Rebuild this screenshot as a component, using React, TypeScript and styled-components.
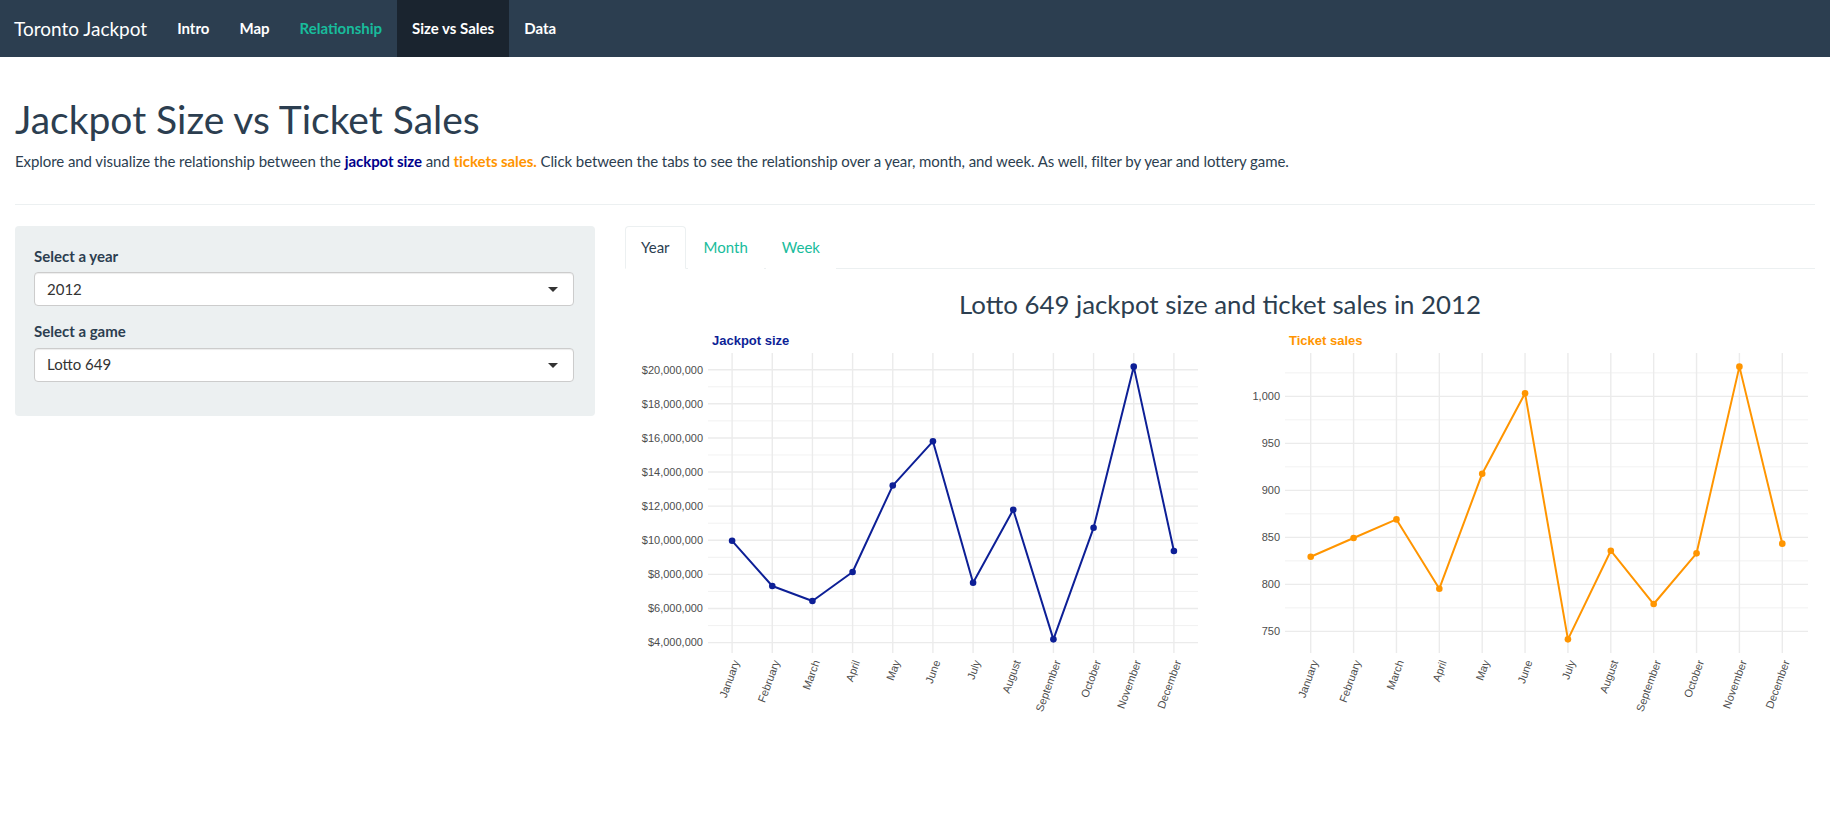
import * as React from 'react'
import styled, { createGlobalStyle } from 'styled-components'

const colors = {
  navy: '#2c3e50',
  navyDark: '#1a242f',
  green: '#18bc9c',
  light: '#ecf0f1',
  blue: '#0d1f96',
  darkBlue: '#00008b',
  orange: '#ff9500',
  axis: '#4d4d4d',
  grid: '#ebebeb'
}

const months = [
  'January',
  'February',
  'March',
  'April',
  'May',
  'June',
  'July',
  'August',
  'September',
  'October',
  'November',
  'December'
]

const jackpot = [
  9968000, 7321000, 6438000, 8142000, 13208000, 15802000, 7507000, 11790000, 4190000, 10731000,
  20180000, 9372000
]

const tickets = [829.4, 849.3, 869.1, 795.4, 917.7, 1003.2, 741.5, 835.8, 779.1, 833.0, 1031.6, 843.3]

const GlobalStyle = createGlobalStyle`
  body {
    margin: 0;
    background: #fff;
    font-family: Lato, "Open Sans", "Liberation Sans", sans-serif;
    font-size: 15px;
    line-height: 1.42857;
    color: ${colors.navy};
  }
  * {
    box-sizing: border-box;
  }
`

const Navbar = styled.nav`
  display: flex;
  height: 57px;
  background: ${colors.navy};
  margin-bottom: 21px;
`

const Brand = styled.div`
  padding: 18px 15px 18px 14px;
  font-size: 19px;
  line-height: 21px;
  color: #fff;
`

const NavLink = styled.a<{ $active?: boolean; $hover?: boolean }>`
  display: block;
  padding: 18px 15px;
  line-height: 21px;
  font-weight: 700;
  text-decoration: none;
  color: ${(p) => (p.$hover ? colors.green : '#fff')};
  background: ${(p) => (p.$active ? colors.navyDark : 'transparent')};
`

const Page = styled.div`
  display: flow-root;
  padding: 0 15px;
`

const Title = styled.h1`
  margin: 20px 0 10px;
  font-size: 39px;
  font-weight: 400;
  line-height: 1.1;
`

const Lead = styled.p`
  margin: 0 0 10.5px;
  letter-spacing: -0.07px;
`

const Highlight = styled.b<{ $color: string }>`
  color: ${(p) => p.$color};
`

const Divider = styled.hr`
  margin: 31.5px 0 21px;
  border: 0;
  border-top: 1px solid ${colors.light};
`

const Layout = styled.div`
  display: grid;
  grid-template-columns: 580px 1fr;
  gap: 30px;
  align-items: start;
`

const Well = styled.div`
  background: ${colors.light};
  border-radius: 4px;
  padding: 20px 21px 19px 19px;
`

const FormGroup = styled.div`
  margin-bottom: 15px;
`

const Label = styled.label`
  display: block;
  margin-bottom: 5px;
  font-weight: 700;
`

const SelectBox = styled.div`
  display: flex;
  align-items: center;
  justify-content: space-between;
  height: 34px;
  padding: 0 15px 0 12px;
  background: #fff;
  border: 1px solid #cccccc;
  border-radius: 4px;
  box-shadow: inset 0 1px 1px rgba(0, 0, 0, 0.075);
  color: #333;
`

const Caret = styled.span`
  width: 0;
  height: 0;
  border-style: solid;
  border-width: 5px 5px 0;
  border-color: #333 transparent transparent;
  margin-top: 1px;
`

const TabBar = styled.ul`
  display: flex;
  margin: 0;
  padding: 0;
  list-style: none;
  border-bottom: 1px solid ${colors.light};
`

const Tab = styled.li<{ $active?: boolean }>`
  margin: 0 2px -1px 0;
  padding: 10px 15px;
  line-height: 21.4px;
  border: 1px solid ${(p) => (p.$active ? colors.light : 'transparent')};
  border-bottom-color: ${(p) => (p.$active ? '#fff' : 'transparent')};
  border-radius: 4px 4px 0 0;
  background: #fff;
  color: ${(p) => (p.$active ? colors.navy : colors.green)};
`

const ChartTitle = styled.h3`
  margin: 21px 0 2px;
  font-size: 25.8px;
  font-weight: 400;
  line-height: 1.1;
  text-align: center;
`

const ChartRow = styled.div`
  display: flex;
`

const ChartSvg = styled.svg`
  display: block;
  flex: none;
  font-family: "Liberation Sans", Arial, sans-serif;
`

const PANEL_TOP = 32
const PANEL_BOTTOM = 332

interface ChartProps {
  title: string
  color: string
  values: number[]
  width: number
  panelLeft: number
  panelRight: number
  majors: number[]
  minors: number[]
  format: (v: number) => string
}

const LineChart: React.FC<ChartProps> = ({ title, color, values, width, panelLeft, panelRight, majors, minors, format }) => {
  const min = Math.min(...values)
  const max = Math.max(...values)
  const pad = (max - min) * 0.05
  const lo = min - pad
  const hi = max + pad
  const y = (v: number) => PANEL_TOP + ((hi - v) / (hi - lo)) * (PANEL_BOTTOM - PANEL_TOP)
  const step = (panelRight - panelLeft) / (values.length - 1 + 1.2)
  const x = (i: number) => panelLeft + step * (0.6 + i)
  const points = values.map((v, i) => `${x(i)},${y(v)}`).join(' ')

  return (
    <ChartSvg width={width} height={400} viewBox={`0 0 ${width} 400`}>
      {minors.map((v) => (
        <line key={`mi${v}`} x1={panelLeft} x2={panelRight} y1={y(v)} y2={y(v)} stroke={colors.grid} strokeWidth={0.7} />
      ))}
      {majors.map((v) => (
        <line key={`ma${v}`} x1={panelLeft} x2={panelRight} y1={y(v)} y2={y(v)} stroke={colors.grid} strokeWidth={1.4} />
      ))}
      {values.map((_, i) => (
        <line key={`v${i}`} x1={x(i)} x2={x(i)} y1={PANEL_TOP} y2={PANEL_BOTTOM} stroke={colors.grid} strokeWidth={1.4} />
      ))}
      <text x={panelLeft + 4} y={24} fill={color} fontSize={13} fontWeight={700}>
        {title}
      </text>
      {majors.map((v) => (
        <text key={`l${v}`} x={panelLeft - 5} y={y(v)} dy="0.35em" textAnchor="end" fill={colors.axis} fontSize={11}>
          {format(v)}
        </text>
      ))}
      {months.map((m, i) => {
        const ax = x(i) + 4
        const ay = PANEL_BOTTOM + 7.5
        return (
          <text
            key={m}
            x={ax}
            y={ay}
            dy="0.35em"
            textAnchor="end"
            fill={colors.axis}
            fontSize={11}
            transform={`rotate(-70 ${ax} ${ay})`}
          >
            {m}
          </text>
        )
      })}
      <polyline points={points} fill="none" stroke={color} strokeWidth={2} strokeLinejoin="round" />
      {values.map((v, i) => (
        <circle key={`p${i}`} cx={x(i)} cy={y(v)} r={3.3} fill={color} />
      ))}
    </ChartSvg>
  )
}

const money = (v: number) => '$' + v.toLocaleString('en-US')
const count = (v: number) => v.toLocaleString('en-US')

const navItems = ['Intro', 'Map', 'Relationship', 'Size vs Sales', 'Data']

export default function App() {
  return (
    <>
      <GlobalStyle />
      <Navbar>
        <Brand>Toronto Jackpot</Brand>
        {navItems.map((item) => (
          <NavLink key={item} $active={item === 'Size vs Sales'} $hover={item === 'Relationship'}>
            {item}
          </NavLink>
        ))}
      </Navbar>
      <Page>
        <Title>Jackpot Size vs Ticket Sales</Title>
        <Lead>
          Explore and visualize the relationship between the <Highlight $color={colors.darkBlue}>jackpot size</Highlight> and{' '}
          <Highlight $color={colors.orange}>tickets sales.</Highlight> Click between the tabs to see the relationship over a
          year, month, and week. As well, filter by year and lottery game.
        </Lead>
        <Divider />
        <Layout>
          <Well>
            <FormGroup>
              <Label>Select a year</Label>
              <SelectBox>
                2012
                <Caret />
              </SelectBox>
            </FormGroup>
            <FormGroup>
              <Label>Select a game</Label>
              <SelectBox>
                Lotto 649
                <Caret />
              </SelectBox>
            </FormGroup>
          </Well>
          <div>
            <TabBar>
              <Tab $active>Year</Tab>
              <Tab>Month</Tab>
              <Tab>Week</Tab>
            </TabBar>
            <ChartTitle>Lotto 649 jackpot size and ticket sales in 2012</ChartTitle>
            <ChartRow>
              <LineChart
                title="Jackpot size"
                color={colors.blue}
                values={jackpot}
                width={595}
                panelLeft={83}
                panelRight={573}
                majors={[4e6, 6e6, 8e6, 10e6, 12e6, 14e6, 16e6, 18e6, 20e6]}
                minors={[5e6, 7e6, 9e6, 11e6, 13e6, 15e6, 17e6, 19e6]}
                format={money}
              />
              <LineChart
                title="Ticket sales"
                color={colors.orange}
                values={tickets}
                width={595}
                panelLeft={65}
                panelRight={588}
                majors={[750, 800, 850, 900, 950, 1000]}
                minors={[775, 825, 875, 925, 975, 1025]}
                format={count}
              />
            </ChartRow>
          </div>
        </Layout>
      </Page>
    </>
  )
}
